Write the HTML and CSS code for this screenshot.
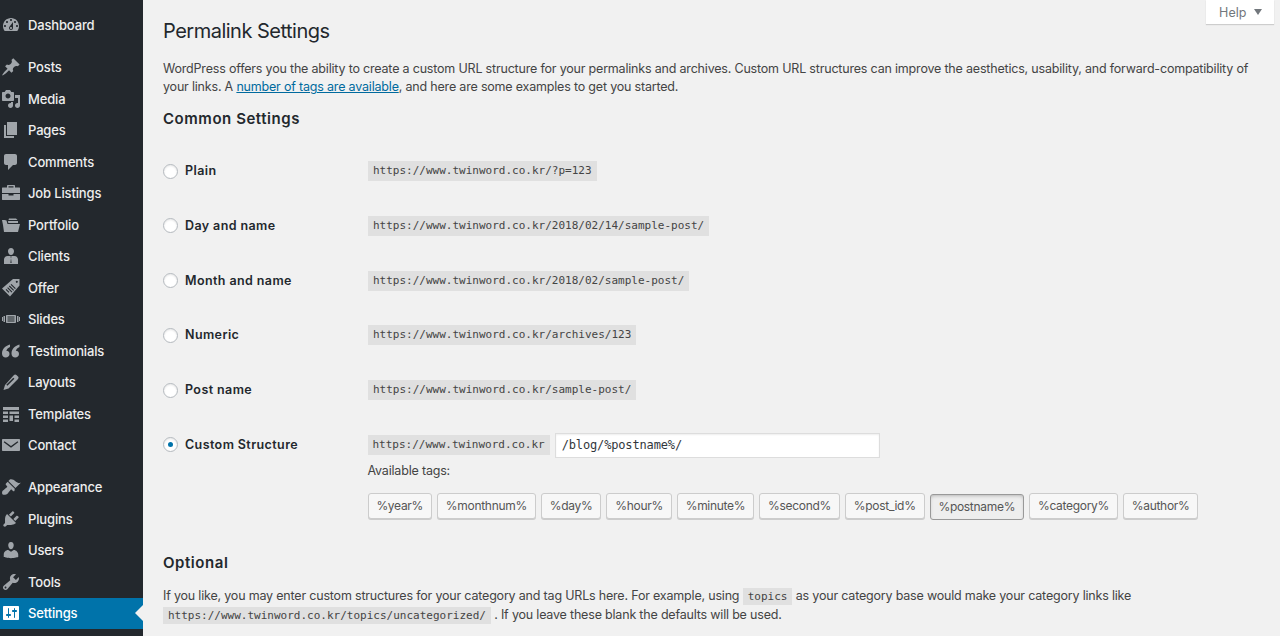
FILE: index.html
```html
<!DOCTYPE html>
<html lang="en">
<head>
<meta charset="utf-8">
<title>Permalink Settings</title>
<link rel="stylesheet" href="styles.css">
</head>
<body>
<div class="shell">
<nav class="side">
  <ul class="menu">
    <li class="item"><svg class="ico" viewBox="0 0 20 20"><path fill-rule="evenodd" d="M3.76 16h12.48c1.1-1.37 1.76-3.11 1.76-5 0-4.42-3.58-8-8-8s-8 3.58-8 8c0 1.89.66 3.63 1.76 5zM10 4c.55 0 1 .45 1 1s-.45 1-1 1-1-.45-1-1 .45-1 1-1zM6 6c.55 0 1 .45 1 1s-.45 1-1 1-1-.45-1-1 .45-1 1-1zm8 0c.55 0 1 .45 1 1s-.45 1-1 1-1-.45-1-1 .45-1 1-1zm-5.37 5.55L12 7v6c0 1.1-.9 2-2 2s-2-.9-2-2c0-.57.24-1.08.63-1.45zM4 10c.55 0 1 .45 1 1s-.45 1-1 1-1-.45-1-1 .45-1 1-1zm12 0c.55 0 1 .45 1 1s-.45 1-1 1-1-.45-1-1 .45-1 1-1zm-5 3c0-.55-.45-1-1-1s-1 .45-1 1 .45 1 1 1 1-.45 1-1z"/></svg>Dashboard</li>
  </ul>
  <ul class="menu">
    <li class="item"><svg class="ico" viewBox="0 0 20 20"><path d="M10.44 3.02l1.82-1.82 6.36 6.35-1.83 1.82c-1.05-.68-2.48-.57-3.41.36l-.75.75c-.92.93-1.04 2.35-.35 3.41l-1.83 1.82-2.41-2.41-2.8 2.79c-.42.42-3.38 2.71-3.8 2.29s1.86-3.39 2.28-3.81l2.79-2.79L4.1 9.36l1.83-1.82c1.05.69 2.48.57 3.4-.36l.75-.75c.93-.92 1.05-2.35.36-3.41z"/></svg>Posts</li>
    <li class="item"><svg class="ico" viewBox="0 0 20 20"><path fill-rule="evenodd" d="M13 11V4c0-.55-.45-1-1-1h-1.67L9 1H5L3.67 3H2c-.55 0-1 .45-1 1v7c0 .55.45 1 1 1h10c.55 0 1-.45 1-1zM7 4.5c1.38 0 2.5 1.12 2.5 2.5S8.38 9.5 7 9.5 4.5 8.38 4.5 7 5.62 4.5 7 4.5zM14 6h5v10.5c0 1.38-1.12 2.5-2.5 2.5S14 17.88 14 16.5s1.12-2.5 2.5-2.5c.17 0 .34.02.5.05V9h-3V6zm-4 8.05V13h2v3.5c0 1.38-1.12 2.5-2.5 2.5S7 17.88 7 16.5 8.12 14 9.5 14c.17 0 .34.02.5.05z"/></svg>Media</li>
    <li class="item"><svg class="ico" viewBox="0 0 20 20"><path d="M6 15V2h10v13H6zm-1 1h8v2H3V5h2v11z"/></svg>Pages</li>
    <li class="item"><svg class="ico" viewBox="0 0 20 20"><path d="M5 2h9c1.1 0 2 .9 2 2v7c0 1.1-.9 2-2 2h-2l-5 5v-5H5c-1.1 0-2-.9-2-2V4c0-1.1.9-2 2-2z"/></svg>Comments</li>
    <li class="item"><svg class="ico" viewBox="0 0 20 20"><path fill-rule="evenodd" d="M7 2h6c.6 0 1 .4 1 1v1.500h4.500c.3 0 .5.2.5.5v5H1V5c0-.3.2-.5.5-.5H6V3c0-.6.4-1 1-1zm.5 1.300v1.200h5V3.300zM1 11h6.500v1.500h5V11H19v5.500c0 .3-.2.5-.5.5h-17c-.3 0-.5-.2-.5-.5z"/></svg>Job Listings</li>
    <li class="item"><svg class="ico" viewBox="0 0 20 20"><path d="M1 5l1 5 1 7h14l2-8H6.500L5.500 5.500 3.500 5zM7 6h10v2H7.300z"/><path d="M8 3.500h7l1.500 1.500H7.500z"/></svg>Portfolio</li>
    <li class="item"><svg class="ico" viewBox="0 0 20 20"><path fill-rule="evenodd" d="M10 2c1.900 0 3 1.400 3 3.200S11.900 9 10 9 7 7 7 5.200 8.100 2 10 2zM6.500 10h7c1.900 0 3.500 1.600 3.500 3.500V18H3v-4.500C3 11.600 4.600 10 6.500 10zM9.200 10.500 10 12l-.6 5h1.200l-.6-5 .8-1.500z"/></svg>Clients</li>
    <li class="item"><svg class="ico" viewBox="0 0 20 20"><path fill-rule="evenodd" d="M12 1h6.500v6.500L9 18.500 1 10.500zm3.800 1.700a1 1 0 1 0 .01 0zM7 9.300l-.8.8 4.400 4.400.8-.8zm1.700-1.700-.8.8 4.400 4.400.8-.8zm1.700-1.700-.8.8 4.400 4.400.8-.8zM5.400 11l-.8.8 3 3 .8-.8z"/></svg>Offer</li>
    <li class="item"><svg class="ico" viewBox="0 0 20 20"><path fill-rule="evenodd" d="M6 6h8c.6 0 1 .4 1 1v6c0 .6-.4 1-1 1H6c-.6 0-1-.4-1-1V7c0-.6.4-1 1-1zm.5 1.400v1.200h7V7.400zm0 2.100v1.100h7V9.500zm0 2v1.100h7v-1.100zM2.500 7H4v6H2.500zM1 8h1v4H1zM16 7h1.500v6H16zM18 8h1v4h-1z"/></svg>Slides</li>
    <li class="item"><svg class="ico" viewBox="0 0 20 20"><path d="M9 3.500C5 4.500 1 7.500 1 12.500 1 15 2.700 16.500 4.700 16.500S8.500 15 8.500 13 7 9.800 5.300 9.800C5.700 8.300 7.300 6.700 9 6zM18.500 3.500c-4 1-8 4-8 9 0 2.500 1.700 4 3.700 4s3.800-1.500 3.800-3.500-1.500-3.200-3.200-3.200c.4-1.500 2-3.100 3.700-3.800z"/></svg>Testimonials</li>
    <li class="item"><svg class="ico" viewBox="0 0 20 20"><path fill-rule="evenodd" d="M13 3c.7-.7 1.700-.7 2.400 0l1.600 1.600c.7.7.7 1.700 0 2.400L7.500 16.500 2.500 18l1.500-5zM12.300 5.700 5.300 12.700l1.100 1.100 7-7z"/></svg>Layouts</li>
    <li class="item"><svg class="ico" viewBox="0 0 20 20"><path d="M2 3h16v3H2zM2 7.500h5V10H2zM8.500 7.500H18V10H8.500zM2 11.500h5V14H2zM8.500 11.500H12V17H8.500zM13.500 11.500H18V14H13.500zM2 15.500h5V18H2zM13.500 15.500H18V18H13.500z"/></svg>Templates</li>
    <li class="item"><svg class="ico" viewBox="0 0 20 20"><path fill-rule="evenodd" d="M2 4h16c.6 0 1 .4 1 1v10c0 .6-.4 1-1 1H2c-.6 0-1-.4-1-1V5c0-.6.4-1 1-1zm1.500 2.200-.8 1.100L10 12.800l7.300-5.500-.8-1.100L10 11z"/></svg>Contact</li>
  </ul>
  <ul class="menu">
    <li class="item"><svg class="ico" viewBox="0 0 20 20"><path d="M14.480 11.060L7.410 3.990l1.500-1.500c.5-.56 2.300-.47 3.510.32 1.210.8 1.430 1.280 2.910 2.100 1.180.64 2.450 1.260 4.450.85zm-.71.71L6.700 4.700 4.930 6.470c-.39.39-.39 1.020 0 1.410l1.060 1.060c.39.39.39 1.030 0 1.420-.6.6-1.430 1.110-2.210 1.690-.35.26-.7.53-1.010.84C1.430 13.230.91 14.800 1.100 16.400c.17.7.7 1.230 1.400 1.400 1.600.19 3.170-.33 4.510-1.670.31-.31.58-.66.84-1.010.58-.78 1.090-1.610 1.690-2.210.39-.39 1.030-.39 1.420 0l1.060 1.060c.39.39 1.020.39 1.410 0z"/></svg>Appearance</li>
    <li class="item"><svg class="ico" viewBox="0 0 20 20"><path d="M13.110 4.360L9.870 7.600 8 5.730l3.240-3.240c.35-.34 1.050-.2 1.560.32.520.51.660 1.210.310 1.550zm-8 1.770l.91-1.120 9.010 9.010-1.190.84c-.71.71-2.630 1.160-3.820 1.160H6.140L4.900 17.260c-.59.59-1.540.59-2.120 0-.59-.58-.59-1.530 0-2.120l1.240-1.240v-3.880c0-1.130.4-3.190 1.090-3.890zm7.260 3.970l3.240-3.240c.34-.35 1.040-.21 1.550.31.520.51.660 1.210.310 1.550l-3.240 3.250z"/></svg>Plugins</li>
    <li class="item"><svg class="ico" viewBox="0 0 20 20"><path d="M10 9.250c-2.270 0-2.730-3.440-2.730-3.440C7 4.020 7.820 2 9.970 2c2.160 0 2.980 2.020 2.710 3.810 0 0-.41 3.440-2.680 3.440zm0 2.570L12.720 10c2.390 0 4.520 2.330 4.520 4.530v2.490s-3.650 1.130-7.240 1.130c-3.650 0-7.240-1.130-7.240-1.130v-2.490c0-2.250 1.940-4.480 4.470-4.480z"/></svg>Users</li>
    <li class="item"><svg class="ico" viewBox="0 0 20 20"><path fill-rule="evenodd" d="M16.680 9.770c-1.340 1.340-3.300 1.670-4.950.99l-5.410 6.520c-.99.99-2.590.99-3.580 0s-.99-2.590 0-3.570l6.520-5.420c-.68-1.650-.35-3.610.99-4.950 1.280-1.280 3.120-1.620 4.720-1.060l-2.890 2.890 2.820 2.820 2.860-2.870c.53 1.580.18 3.390-1.080 4.650zM3.810 16.210c.4.39 1.040.39 1.430 0 .4-.4.4-1.040 0-1.430-.39-.4-1.030-.4-1.430 0-.39.39-.39 1.030 0 1.430z"/></svg>Tools</li>
    <li class="item current"><svg class="ico" viewBox="0 0 20 20"><path fill-rule="evenodd" d="M18 16V4c0-.55-.45-1-1-1H3c-.55 0-1 .45-1 1v12c0 .55.45 1 1 1h14c.55 0 1-.45 1-1zM8 11h1c.55 0 1 .45 1 1s-.45 1-1 1H8v1.500c0 .28-.22.5-.5.5s-.5-.22-.5-.5V13H6c-.55 0-1-.45-1-1s.45-1 1-1h1V5.500c0-.28.22-.5.5-.5s.5.22.5.5V11zm5-2h-1c-.55 0-1-.45-1-1s.45-1 1-1h1V5.500c0-.28.22-.5.5-.5s.5.22.5.5V7h1c.55 0 1 .45 1 1s-.45 1-1 1h-1v5.500c0 .28-.22.5-.5.5s-.5-.22-.5-.5V9z"/></svg>Settings</li>
  </ul>
</nav>
<main class="content">
  <button class="help">Help <span class="caret"></span></button>
  <h1 class="title">Permalink Settings</h1>
  <p class="intro">WordPress offers you the ability to create a custom URL structure for your permalinks and archives. Custom URL structures can improve the aesthetics, usability, and forward-compatibility of your links. A <a href="#">number of tags are available</a>, and here are some examples to get you started.</p>
  <h2 class="section">Common Settings</h2>
  <div class="rows">
    <div class="row"><label class="lab"><span class="radio"></span>Plain</label><code>https://www.twinword.co.kr/?p=123</code></div>
    <div class="row"><label class="lab"><span class="radio"></span>Day and name</label><code>https://www.twinword.co.kr/2018/02/14/sample-post/</code></div>
    <div class="row"><label class="lab"><span class="radio"></span>Month and name</label><code>https://www.twinword.co.kr/2018/02/sample-post/</code></div>
    <div class="row"><label class="lab"><span class="radio"></span>Numeric</label><code>https://www.twinword.co.kr/archives/123</code></div>
    <div class="row"><label class="lab"><span class="radio"></span>Post name</label><code>https://www.twinword.co.kr/sample-post/</code></div>
    <div class="row custom"><label class="lab"><span class="radio on"></span>Custom Structure</label>
      <div class="custom-body">
        <div class="url-line"><code>https://www.twinword.co.kr</code><input class="url" type="text" value="/blog/%postname%/"></div>
        <div class="avail">Available tags:</div>
        <div class="tags">
          <button class="tag">%year%</button><button class="tag">%monthnum%</button><button class="tag">%day%</button><button class="tag">%hour%</button><button class="tag">%minute%</button><button class="tag">%second%</button><button class="tag">%post_id%</button><button class="tag active">%postname%</button><button class="tag">%category%</button><button class="tag">%author%</button>
        </div>
      </div>
    </div>
  </div>
  <h2 class="section opt">Optional</h2>
  <p class="outro">If you like, you may enter custom structures for your category and tag URLs here. For example, using <code>topics</code> as your category base would make your category links like <code>https://www.twinword.co.kr/topics/uncategorized/</code> . If you leave these blank the defaults will be used.</p>
</main>
</div>
</body>
</html>
```
FILE: styles.css
```css
html, body { margin: 0; padding: 0; height: 636px; overflow: hidden; }
body { background: #f1f1f1; color: #444; font: 12.5px/20px Inter, "Noto Sans", sans-serif; letter-spacing: -.19px; -webkit-font-smoothing: antialiased; }
.shell { display: flex; height: 636px; }
.side { width: 143px; flex: none; background: #23282d; box-sizing: border-box; padding-top: 9.600px; overflow: hidden; }
.menu { list-style: none; margin: 0 0 10.5px; padding: 0; }
.item { display: flex; align-items: center; height: 31.5px; color: #eee; font-size: 13px; font-weight: 500; letter-spacing: -.15px; position: relative; }
.ico { width: 20px; height: 20px; margin: 0 7px 0 1px; fill: #a0a5aa; flex: none; }
.current { background: #0073aa; color: #fff; }
.current .ico { fill: #fff; }
.current::after { content: ""; position: absolute; right: 0; top: 50%; margin-top: -8px; border: 8px solid transparent; border-left: 0; border-right-color: #f1f1f1; }
.content { flex: 1; min-width: 0; position: relative; padding: 0 20px; }
.help { position: absolute; top: 0; right: 6px; width: 68px; height: 24px; background: #fff; border: 0; box-shadow: 0 1px 1px rgba(0,0,0,.15); color: #72777c; font: 12.5px Inter, sans-serif; padding: 0 0 0 1px; }
.caret { display: inline-block; margin-left: 4px; border: 4.5px solid transparent; border-top: 6px solid #72777c; border-bottom: 0; vertical-align: 2px; }
.title { font-size: 20px; font-weight: 400; line-height: 28px; letter-spacing: -.5px; color: #23282d; margin: 17px 0 0; }
.intro { margin: 15px 0 0; line-height: 18px; color: #444; }
a { color: #006a9e; }
.section { font-size: 15px; font-weight: 600; color: #23282d; line-height: 20px; letter-spacing: .55px; margin: 13px 0 0; }
.rows { margin-top: 16px; }
.row { display: flex; height: 54.800px; align-items: flex-start; padding-top: 16px; box-sizing: border-box; }
.lab { display: flex; align-items: center; width: 205px; flex: none; font-weight: 600; letter-spacing: .4px; color: #23282d; height: 20px; margin-right: 0; }
.radio { width: 13px; height: 13px; border-radius: 50%; border: 1px solid #b4b9be; background: #fff; margin-right: 7px; box-sizing: content-box; box-shadow: inset 0 1px 2px rgba(0,0,0,.1); position: relative; flex: none; }
.radio.on::after { content: ""; position: absolute; left: 4px; top: 4px; width: 5px; height: 5px; border-radius: 50%; background: #0073aa; }
code { font: 11px/18px "DejaVu Sans Mono", monospace; letter-spacing: 0; background: rgba(0,0,0,.07); padding: 1px 5px 1px; color: #444; }
.row.custom { height: auto; padding-bottom: 0; }
.custom-body { display: flex; flex-direction: column; margin-left: -.5px; }
.url-line { display: flex; align-items: center; gap: 5px; height: 25px; margin-top: -2px; }
.url { width: 325px; height: 25px; box-sizing: border-box; padding: 0 6px; border: 1px solid #ddd; background: #fff; font: 12px "DejaVu Sans Mono", monospace; letter-spacing: -.15px; color: #32373c; box-shadow: inset 0 1px 2px rgba(0,0,0,.07); outline: 0; }
.avail { margin-top: 3px; line-height: 20px; }
.tags { display: flex; gap: 5px; margin-top: 12px; }
.tag { height: 26px; padding: 0 7.900px; background: #f7f7f7; border: 1px solid #ccc; border-radius: 3px; box-shadow: 0 1px 0 #ccc; color: #555; font: 12px Inter, sans-serif; letter-spacing: -.3px; white-space: nowrap; }
.tag.active { background: #eee; border-color: #999; box-shadow: inset 0 2px 5px -3px rgba(0,0,0,.5); transform: translateY(1px); }
.opt { margin-top: 34px; }
.outro { margin: 13px 0 0; line-height: 19px; width: 1090px; }
.outro code { padding: 2px 5px; line-height: 1; }
```
